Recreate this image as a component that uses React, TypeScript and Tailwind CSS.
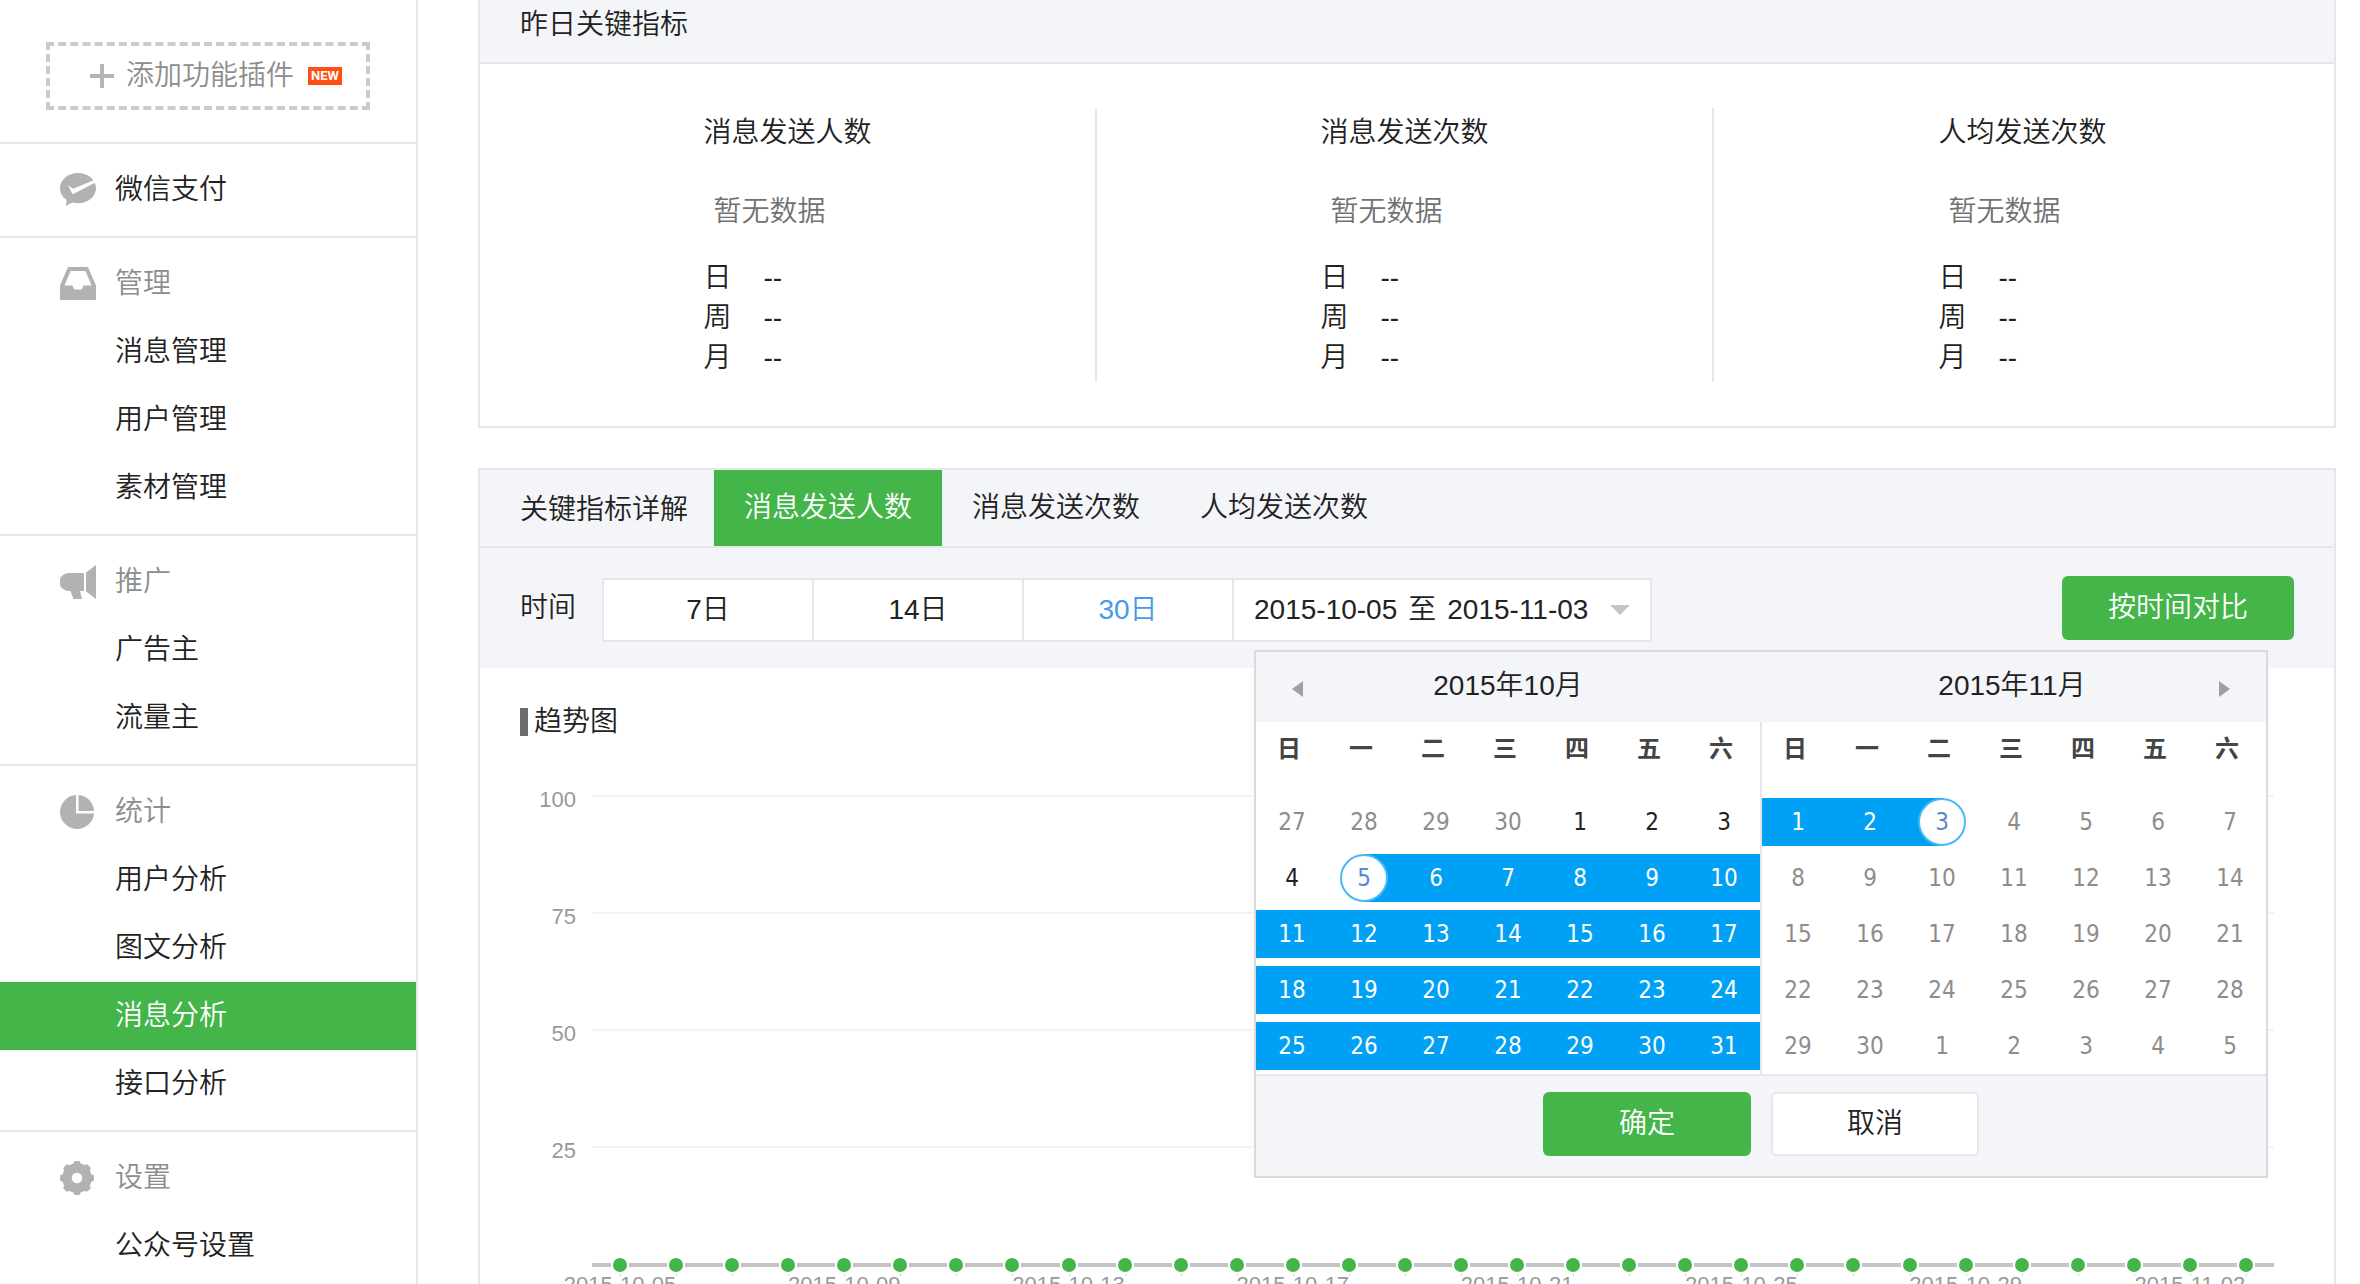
import React from "react";

type NavItem = { label: string; active?: boolean };
type NavSection = { title: string; icon: React.ReactNode; items: NavItem[] };

function PayIcon() {
  return (
    <svg width="36" height="34" viewBox="0 0 36 34" aria-hidden="true">
      <path d="M18 0C8 0 0 6.800 0 15.200c0 4.800 2.600 9 6.600 11.700L6 33l6.300-3.500c1.800.5 3.700.7 5.700.7 10 0 18-6.700 18-15S28 0 18 0z" fill="#b2b2b2" />
      <path d="M8 12.600l5.200 3.200L36 6.200v3L12.700 21.200z" fill="#fff" />
    </svg>
  );
}

function InboxIcon() {
  return (
    <svg width="36" height="34" viewBox="0 0 36 34" aria-hidden="true">
      <path fillRule="evenodd" d="M8 0h20l8 18.500V33H0V18.500zM10.600 4L4.400 18.500h8l2 4h7.200l2-4h8L25.400 4z" fill="#b2b2b2" />
    </svg>
  );
}

function HornIcon() {
  return (
    <svg width="36" height="34" viewBox="0 0 36 34" aria-hidden="true">
      <path d="M8.500 8H24v18h-4l2 8h-8.500l-3-8h-2a9 9 0 0 1 0-18zM26 7.500L36 0v34l-10-7.800z" fill="#b2b2b2" />
    </svg>
  );
}

function PieIcon() {
  return (
    <svg width="34" height="34" viewBox="0 0 34 34" aria-hidden="true">
      <path d="M16 0v18.500h18A17 17 0 1 1 16 0z" fill="#b2b2b2" />
      <path d="M18.500 0A17 17 0 0 1 34 16H18.500z" fill="#b2b2b2" />
    </svg>
  );
}

function GearIcon() {
  return (
    <svg width="34" height="34" viewBox="0 0 34 34" aria-hidden="true">
      <g fill="#b2b2b2">
        {[0, 45, 90, 135].map((angle) => (
          <rect key={angle} x="13.500" y="0" width="7" height="34" rx="2" transform={`rotate(${angle} 17 17)`} />
        ))}
        <circle cx="17" cy="17" r="14.800" />
      </g>
      <circle cx="17" cy="17" r="5.300" fill="#fff" />
    </svg>
  );
}

const sections: NavSection[] = [
  { title: "管理", icon: <InboxIcon />, items: [{ label: "消息管理" }, { label: "用户管理" }, { label: "素材管理" }] },
  { title: "推广", icon: <HornIcon />, items: [{ label: "广告主" }, { label: "流量主" }] },
  {
    title: "统计",
    icon: <PieIcon />,
    items: [{ label: "用户分析" }, { label: "图文分析" }, { label: "消息分析", active: true }, { label: "接口分析" }],
  },
  { title: "设置", icon: <GearIcon />, items: [{ label: "公众号设置" }] },
];

function Sidebar() {
  return (
    <nav className="w-[418px] shrink-0 border-r-2 border-[#e7e7eb]">
      <div className="px-[46px] pt-[42px] pb-8">
        <button type="button" className="flex h-[68px] w-full items-center border-4 border-dashed border-[#cbcbcb] pl-10 text-[#8d8d8d]">
          <svg width="24" height="24" viewBox="0 0 24 24" aria-hidden="true">
            <path d="M12 0v24M0 12h24" stroke="#b5b5b5" strokeWidth="4" />
          </svg>
          <span className="ml-3">添加功能插件</span>
          <span className="ml-[14px] flex h-[18px] w-[34px] items-center justify-center bg-[#ff4f14] font-[Roboto] text-[13px] font-bold text-white">
            NEW
          </span>
        </button>
      </div>
      <div className="border-t-2 border-[#e7e7eb] py-3">
        <a href="#pay" className="flex h-[68px] items-center pl-[60px]">
          <span className="flex w-[55px]"><PayIcon /></span>
          微信支付
        </a>
      </div>
      {sections.map((section) => (
        <section key={section.title} className="border-t-2 border-[#e7e7eb] py-3">
          <h2 className="flex h-[68px] items-center pl-[60px] text-[#8d8d8d]">
            <span className="flex w-[55px]">{section.icon}</span>
            {section.title}
          </h2>
          <ul>
            {section.items.map((item) => (
              <li key={item.label}>
                <a
                  href="#menu"
                  aria-current={item.active ? "page" : undefined}
                  className={
                    item.active
                      ? "flex h-[68px] items-center bg-[#44b549] pl-[115px] text-white"
                      : "flex h-[68px] items-center pl-[115px]"
                  }
                >
                  {item.label}
                </a>
              </li>
            ))}
          </ul>
        </section>
      ))}
    </nav>
  );
}

function KeyMetrics() {
  const metrics = ["消息发送人数", "消息发送次数", "人均发送次数"];
  return (
    <section className="border-x-2 border-b-2 border-[#e7e7eb]">
      <h2 className="flex h-16 items-center border-b-2 border-[#e7e7eb] bg-[#f4f5f9] pb-3 pl-10">昨日关键指标</h2>
      <div className="grid grid-cols-3 py-11 pr-[3px]">
        {metrics.map((name, index) => (
          <div
            key={name}
            className={
              index < 2 ? "flex justify-center border-r-2 border-[#e7e7eb] pb-1" : "flex justify-center pb-1"
            }
          >
            <div>
              <h3 className="leading-[50px]">{name}</h3>
              <p className="mt-[30px] pl-[10px] leading-[48px] text-[#717171]">暂无数据</p>
              <dl className="mt-[22px] grid grid-cols-[60px_auto] leading-10">
                {["日", "周", "月"].map((unit) => (
                  <React.Fragment key={unit}>
                    <dt>{unit}</dt>
                    <dd>--</dd>
                  </React.Fragment>
                ))}
              </dl>
            </div>
          </div>
        ))}
      </div>
    </section>
  );
}

type DayKind = "muted" | "plain" | "range" | "start" | "end";
type Day = { day: number; kind: DayKind };

function span(from: number, to: number, kind: DayKind): Day[] {
  return Array.from({ length: to - from + 1 }, (_, i) => ({ day: from + i, kind }));
}

const october: Day[] = [
  ...span(27, 30, "muted"),
  ...span(1, 4, "plain"),
  ...span(5, 5, "start"),
  ...span(6, 31, "range"),
];
const november: Day[] = [
  ...span(1, 2, "range"),
  ...span(3, 3, "end"),
  ...span(4, 30, "muted"),
  ...span(1, 5, "muted"),
];

const dayStyles: Record<DayKind, string> = {
  muted: "flex h-12 w-full items-center justify-center text-[#8d8d8d]",
  plain: "flex h-12 w-full items-center justify-center",
  range: "flex h-12 w-full items-center justify-center bg-[#00a0f5] text-white",
  start: "flex h-12 w-full items-center justify-center bg-linear-to-r from-white from-50% to-[#00a0f5] to-50% text-[#5b89c8]",
  end: "flex h-12 w-full items-center justify-center bg-linear-to-r from-[#00a0f5] from-50% to-white to-50% text-[#5b89c8]",
};

function MonthTable({ label, days }: { label: string; days: Day[] }) {
  const weeks = Array.from({ length: 5 }, (_, i) => days.slice(i * 7, i * 7 + 7));
  return (
    <table aria-label={label} className="w-full table-fixed border-collapse">
      <thead>
        <tr className="h-[72px] align-top text-2xl text-[#444]">
          {["日", "一", "二", "三", "四", "五", "六"].map((d) => (
            <th key={d} scope="col" className="pt-[11px] pr-[6px] font-bold">{d}</th>
          ))}
        </tr>
      </thead>
      <tbody className="font-['DejaVu_Sans_Condensed','DejaVu_Sans',sans-serif] text-2xl">
        {weeks.map((week, w) => (
          <tr key={w}>
            {week.map(({ day, kind }) => (
              <td key={day} className="px-0 py-1">
                <button type="button" className={dayStyles[kind]}>
                  {kind === "start" || kind === "end" ? (
                    <span className="flex size-12 items-center justify-center rounded-full border-2 border-[#45b8fa] bg-white">
                      {day}
                    </span>
                  ) : (
                    day
                  )}
                </button>
              </td>
            ))}
          </tr>
        ))}
      </tbody>
    </table>
  );
}

function DatePopup() {
  return (
    <div className="absolute top-[72px] left-[22px] z-10 w-[1014px] border-2 border-[#d9dadc] bg-white">
      <div className="grid h-[70px] grid-cols-2 bg-[#f4f5f9]">
        <div className="flex items-center px-9">
          <button type="button" aria-label="上个月" className="mt-1">
            <svg width="11" height="16" viewBox="0 0 11 16"><path d="M11 0v16L0 8z" fill="#a0a0a0" /></svg>
          </button>
          <span className="flex-1 pr-3 pb-[2px] text-center">2015年10月</span>
        </div>
        <div className="flex items-center px-9">
          <span className="flex-1 pb-[2px] pl-2 text-center">2015年11月</span>
          <button type="button" aria-label="下个月" className="mt-1">
            <svg width="11" height="16" viewBox="0 0 11 16"><path d="M0 0v16l11-8z" fill="#a0a0a0" /></svg>
          </button>
        </div>
      </div>
      <div className="flex">
        <div className="flex-1"><MonthTable label="2015年10月" days={october} /></div>
        <div className="w-[2px] bg-[#e7e7eb]" />
        <div className="flex-1"><MonthTable label="2015年11月" days={november} /></div>
      </div>
      <div className="flex justify-center gap-5 border-t-2 border-[#e7e7eb] bg-[#f4f5f9] pt-4 pb-5">
        <button type="button" className="h-16 w-[208px] rounded-md bg-[#44b549] text-white">确定</button>
        <button type="button" className="h-16 w-[208px] rounded-md border-2 border-[#e7e7eb] bg-white">取消</button>
      </div>
    </div>
  );
}

const axisLabels: Record<number, string> = {
  0: "2015-10-05",
  4: "2015-10-09",
  8: "2015-10-13",
  12: "2015-10-17",
  16: "2015-10-21",
  20: "2015-10-25",
  24: "2015-10-29",
  28: "2015-11-02",
};

function TrendChart() {
  const points = Array.from({ length: 30 }, (_, i) => i);
  return (
    <div className="mt-12 pr-[60px] text-[22px] text-[#999]">
      {[100, 75, 50, 25].map((value) => (
        <div key={value} className="flex h-[117px]">
          <span className="w-28 pr-4 text-right leading-8">{value}</span>
          <span className="mt-[11px] h-[2px] flex-1 bg-[#f3f3f3]" />
        </div>
      ))}
      <div className="ml-28 grid grid-cols-[repeat(30,minmax(0,1fr))]">
        {points.map((i) => (
          <div key={i}>
            <div className="relative flex h-[26px] items-center justify-center">
              <span className="absolute inset-x-0 top-[11px] h-1 bg-[#c4c4c4]" />
              <span className="absolute top-[22px] left-1/2 h-[2px] w-px bg-[#c0d0e0]" />
              <span className="relative size-[18px] rounded-full border-2 border-white bg-[#44b549]" />
            </div>
            <div className="flex h-[14px] justify-center leading-[14px] whitespace-nowrap">{axisLabels[i]}</div>
          </div>
        ))}
      </div>
    </div>
  );
}

function MetricDetail() {
  return (
    <section className="mt-10 border-2 border-[#e7e7eb]">
      <div className="flex h-[78px] border-b-2 border-[#e7e7eb] bg-[#f4f5f9]">
        <h2 className="flex items-center pt-1 pr-[26px] pl-10">关键指标详解</h2>
        <button type="button" className="bg-[#44b549] px-[30px] text-white">消息发送人数</button>
        <button type="button" className="px-[30px]">消息发送次数</button>
        <button type="button" className="px-[30px]">人均发送次数</button>
      </div>
      <div className="flex h-[120px] items-start bg-[#f4f5f9] pt-7 pr-10 pl-10">
        <span className="leading-[64px]">时间</span>
        <div className="mt-[2px] ml-[26px] flex h-16">
          <button type="button" className="w-[210px] border-y-2 border-l-2 border-[#e7e7eb] bg-white">7日</button>
          <button type="button" className="w-[210px] border-y-2 border-l-2 border-[#e7e7eb] bg-white">14日</button>
          <button type="button" className="w-[210px] border-y-2 border-l-2 border-[#e7e7eb] bg-white text-[#459ae9]">30日</button>
          <div className="relative w-[420px]">
            <button type="button" aria-expanded="true" className="flex h-16 w-full items-center justify-between border-2 border-[#e7e7eb] bg-white pr-5 pl-5">
              <span className="flex gap-[11px]">
                <span>2015-10-05</span>
                <span>至</span>
                <span>2015-11-03</span>
              </span>
              <svg width="20" height="10" viewBox="0 0 20 10" aria-hidden="true"><path d="M0 0h20L10 10z" fill="#c4c4c4" /></svg>
            </button>
            <DatePopup />
          </div>
        </div>
        <button type="button" className="ml-auto h-16 w-[232px] rounded-md bg-[#44b549] text-white">按时间对比</button>
      </div>
      <h3 className="mt-10 flex h-7 items-center pl-10">
        <span className="mr-[6px] h-7 w-2 bg-[#6b6b6b]" />
        趋势图
      </h3>
      <TrendChart />
    </section>
  );
}

export default function App() {
  return (
    <div className="flex h-screen overflow-hidden bg-white font-['Liberation_Sans','Noto_Sans_CJK_SC',sans-serif] text-[28px] font-[350] text-[#222]">
      <Sidebar />
      <main className="min-w-0 flex-1 pr-6 pl-[60px]">
        <KeyMetrics />
        <MetricDetail />
      </main>
    </div>
  );
}
